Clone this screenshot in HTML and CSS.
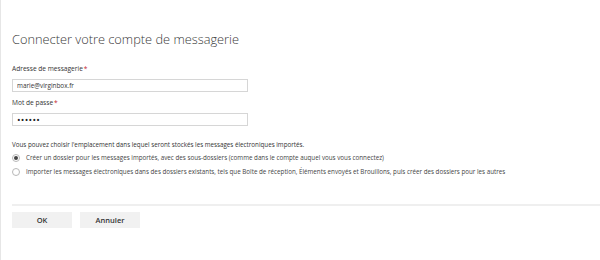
FILE: index.html
```html
<!DOCTYPE html>
<html lang="fr">
<head>
  <meta charset="UTF-8" />
  <title>Connecter votre compte de messagerie</title>
  <link rel="stylesheet" href="styles.css">
</head>
<body>
  <main class="panel">
    <h1>Connecter votre compte de messagerie</h1>

    <form class="form">
      <label class="label" for="email">Adresse de messagerie<span class="req">*</span></label>
      <input class="field" type="text" id="email" value="marie@virginbox.fr" />

      <label class="label" for="pass">Mot de passe<span class="req">*</span></label>
      <input class="field pass" type="password" id="pass" value="secret" />

      <p class="hint">Vous pouvez choisir l'emplacement dans lequel seront stockés les messages électroniques importés.</p>

      <label class="option">
        <span class="radio checked"></span>
        Créer un dossier pour les messages importés, avec des sous-dossiers (comme dans le compte auquel vous vous connectez)
      </label>
      <label class="option">
        <span class="radio"></span>
        Importer les messages électroniques dans des dossiers existants, tels que Boîte de réception, Éléments envoyés et Brouillons, puis créer des dossiers pour les autres
      </label>

      <div class="actions">
        <button type="button" class="btn">OK</button>
        <button type="button" class="btn">Annuler</button>
      </div>
    </form>
  </main>
</body>
</html>
```

FILE: styles.css
```css
body {
  margin: 0;
  font-family: "Open Sans", "Noto Sans", sans-serif;
  color: #333;
  background: #fff;
}

.panel {
  height: 260px;
  border-left: 1px solid #e6e6e6;
  padding: 31px 0 0 11px;
  box-sizing: border-box;
}

h1 {
  margin: 0 0 17px;
  font-size: 12.8px;
  line-height: 16px;
  font-weight: 300;
  color: #3a3a3a;
}

.form {
  display: flex;
  flex-direction: column;
}

.label {
  font-size: 6.6px;
  line-height: 10px;
  color: #333;
  margin-bottom: 5px;
}

.req {
  color: #c4262e;
  margin-left: 1px;
}

.field {
  width: 236px;
  height: 13px;
  box-sizing: border-box;
  border: 1px solid #d6d6d6;
  padding: 0 4px;
  font-family: inherit;
  font-size: 6.4px;
  color: #333;
  margin: 0 0 6px;
  outline: none;
}

.pass {
  font-size: 9.5px;
  letter-spacing: 0.3px;
  color: #222;
  margin-bottom: 0;
}

.hint {
  margin: 14px 0 3px;
  font-size: 6.25px;
  line-height: 10px;
  color: #333;
}

.option {
  display: flex;
  align-items: center;
  gap: 6px;
  font-size: 6.25px;
  line-height: 10px;
  color: #444;
  margin-bottom: 4px;
  white-space: nowrap;
}

.radio {
  width: 8px;
  height: 8px;
  border: 1px solid #b8b8b8;
  border-radius: 50%;
  box-sizing: border-box;
  display: flex;
  align-items: center;
  justify-content: center;
}

.radio.checked::after {
  content: "";
  width: 4px;
  height: 4px;
  border-radius: 50%;
  background: #444;
}

.actions {
  margin-top: 23px;
  border-top: 2px solid #efefef;
  padding-top: 6px;
  display: flex;
  gap: 8px;
}

.btn {
  width: 60px;
  height: 16px;
  border: none;
  background: #f1f1f1;
  font-family: inherit;
  font-size: 7.5px;
  font-weight: 600;
  color: #333;
  padding: 0;
}
```
